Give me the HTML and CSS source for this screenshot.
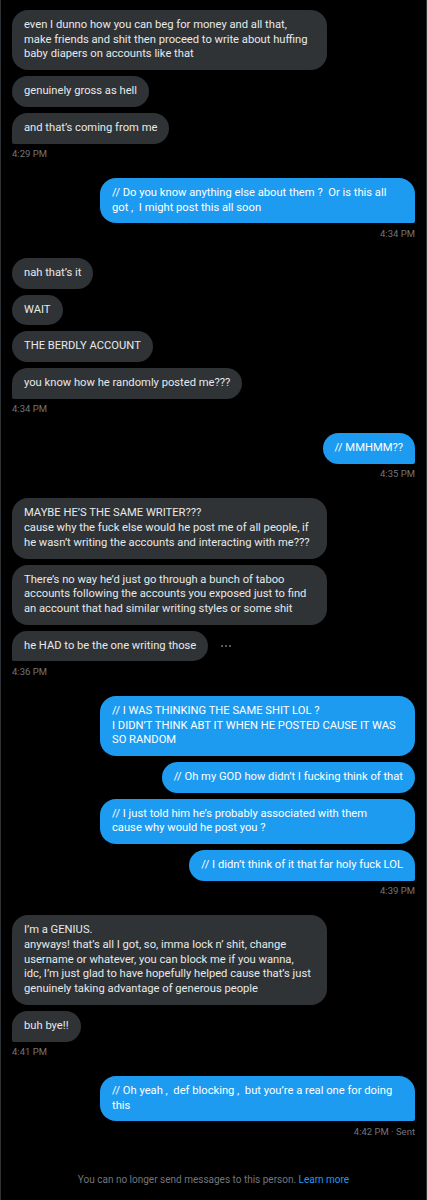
FILE: index.html
```html
<!DOCTYPE html>
<html lang="en">
<head>
  <meta charset="UTF-8" />
  <meta name="viewport" content="width=device-width, initial-scale=1.0"/>
  <title>Messages</title>
  <link rel="stylesheet" href="styles.css">
</head>
<body>
  <div class="convo">
    <!-- them -->
    <div class="group in">
      <div class="msg">even I dunno how you can beg for money and all that, make friends and shit then proceed to write about huffing baby diapers on accounts like that</div>
      <div class="msg">genuinely gross as hell</div>
      <div class="msg last">and that’s coming from me</div>
      <div class="time">4:29 PM</div>
    </div>

    <!-- me -->
    <div class="group out">
      <div class="msg last">// Do you know anything else about them ?  Or is this all got ,  I might post this all soon</div>
      <div class="time">4:34 PM</div>
    </div>

    <div class="group in">
      <div class="msg">nah that’s it</div>
      <div class="msg">WAIT</div>
      <div class="msg">THE BERDLY ACCOUNT</div>
      <div class="msg last">you know how he randomly posted me???</div>
      <div class="time">4:34 PM</div>
    </div>

    <div class="group out">
      <div class="msg last">// MMHMM??</div>
      <div class="time">4:35 PM</div>
    </div>

    <div class="group in">
      <div class="msg">MAYBE HE’S THE SAME WRITER???<br>cause why the fuck else would he post me of all people, if he wasn’t writing the accounts and interacting with me???</div>
      <div class="msg">There’s no way he’d just go through a bunch of taboo accounts following the accounts you exposed just to find an account that had similar writing styles or some shit</div>
      <div class="row">
        <div class="msg last">he HAD to be the one writing those</div>
        <span class="more">
          <svg width="12" height="4" viewBox="0 0 12 4"><circle cx="2" cy="2" r="1"/><circle cx="6" cy="2" r="1"/><circle cx="10" cy="2" r="1"/></svg>
        </span>
      </div>
      <div class="time">4:36 PM</div>
    </div>

    <div class="group out">
      <div class="msg">// I WAS THINKING THE SAME SHIT LOL ?<br>I DIDN’T THINK ABT IT WHEN HE POSTED CAUSE IT WAS SO RANDOM</div>
      <div class="msg">// Oh my GOD how didn’t I fucking think of that</div>
      <div class="msg wide">// I just told him he’s probably associated with them<br>cause why would he post you ?</div>
      <div class="msg last">// I didn’t think of it that far holy fuck LOL</div>
      <div class="time">4:39 PM</div>
    </div>

    <div class="group in">
      <div class="msg">I’m a GENIUS.<br>anyways! that’s all I got, so, imma lock n’ shit, change username or whatever, you can block me if you wanna,<br>idc, I’m just glad to have hopefully helped cause that’s just genuinely taking advantage of generous people</div>
      <div class="msg last">buh bye!!</div>
      <div class="time">4:41 PM</div>
    </div>

    <div class="group out">
      <div class="msg last">// Oh yeah ,  def blocking ,  but you’re a real one for doing this</div>
      <div class="time">4:42 PM · Sent</div>
    </div>

    <p class="notice">You can no longer send messages to this person. <a href="#">Learn more</a></p>
  </div>
</body>
</html>
```

FILE: styles.css
```css
:root {
  --bg: #000;
  --line: #2f3336;
  --bubble: #2f3336;
  --blue: #1d9bf0;
  --text: #e7e9ea;
  --muted: #71767b;
}

* { box-sizing: border-box; margin: 0; padding: 0; }
body {
  background-color: var(--bg);
  color: var(--text);
  font-family: Roboto, "Liberation Sans", Arial, sans-serif;
}
.convo {
  min-height: 1200px;
  border-left: 1px solid var(--line);
  border-right: 1px solid var(--line);
  padding: 10px 11px 0 11px;
}

/* message groups */
.group {
  display: flex;
  flex-direction: column;
  gap: 6px;
  margin-bottom: 18px;
}
.group.in { align-items: flex-start; }
.group.out { align-items: flex-end; }

.msg {
  max-width: 315px;
  padding: 8px 12px;
  border-radius: 16px;
  font-size: 11.2px;
  line-height: 14.7px;
  white-space: pre-wrap;
}
.msg.wide { width: 315px; }
.in .msg {
  background-color: var(--bubble);
  color: var(--text);
}
.in .msg.last { border-bottom-left-radius: 2px; }
.out .msg {
  background-color: var(--blue);
  color: #fff;
}
.out .msg.last { border-bottom-right-radius: 2px; }

.row {
  display: flex;
  align-items: center;
  gap: 12px;
}
.more { display: flex; }
.more svg { fill: var(--muted); }

.time {
  margin-top: -1.5px;
  font-size: 9.5px;
  line-height: 12px;
  color: var(--muted);
}

.notice {
  margin-top: 35px;
  text-align: center;
  font-size: 10px;
  line-height: 14px;
  color: var(--muted);
}
.notice a {
  color: var(--blue);
  text-decoration: none;
}
```
